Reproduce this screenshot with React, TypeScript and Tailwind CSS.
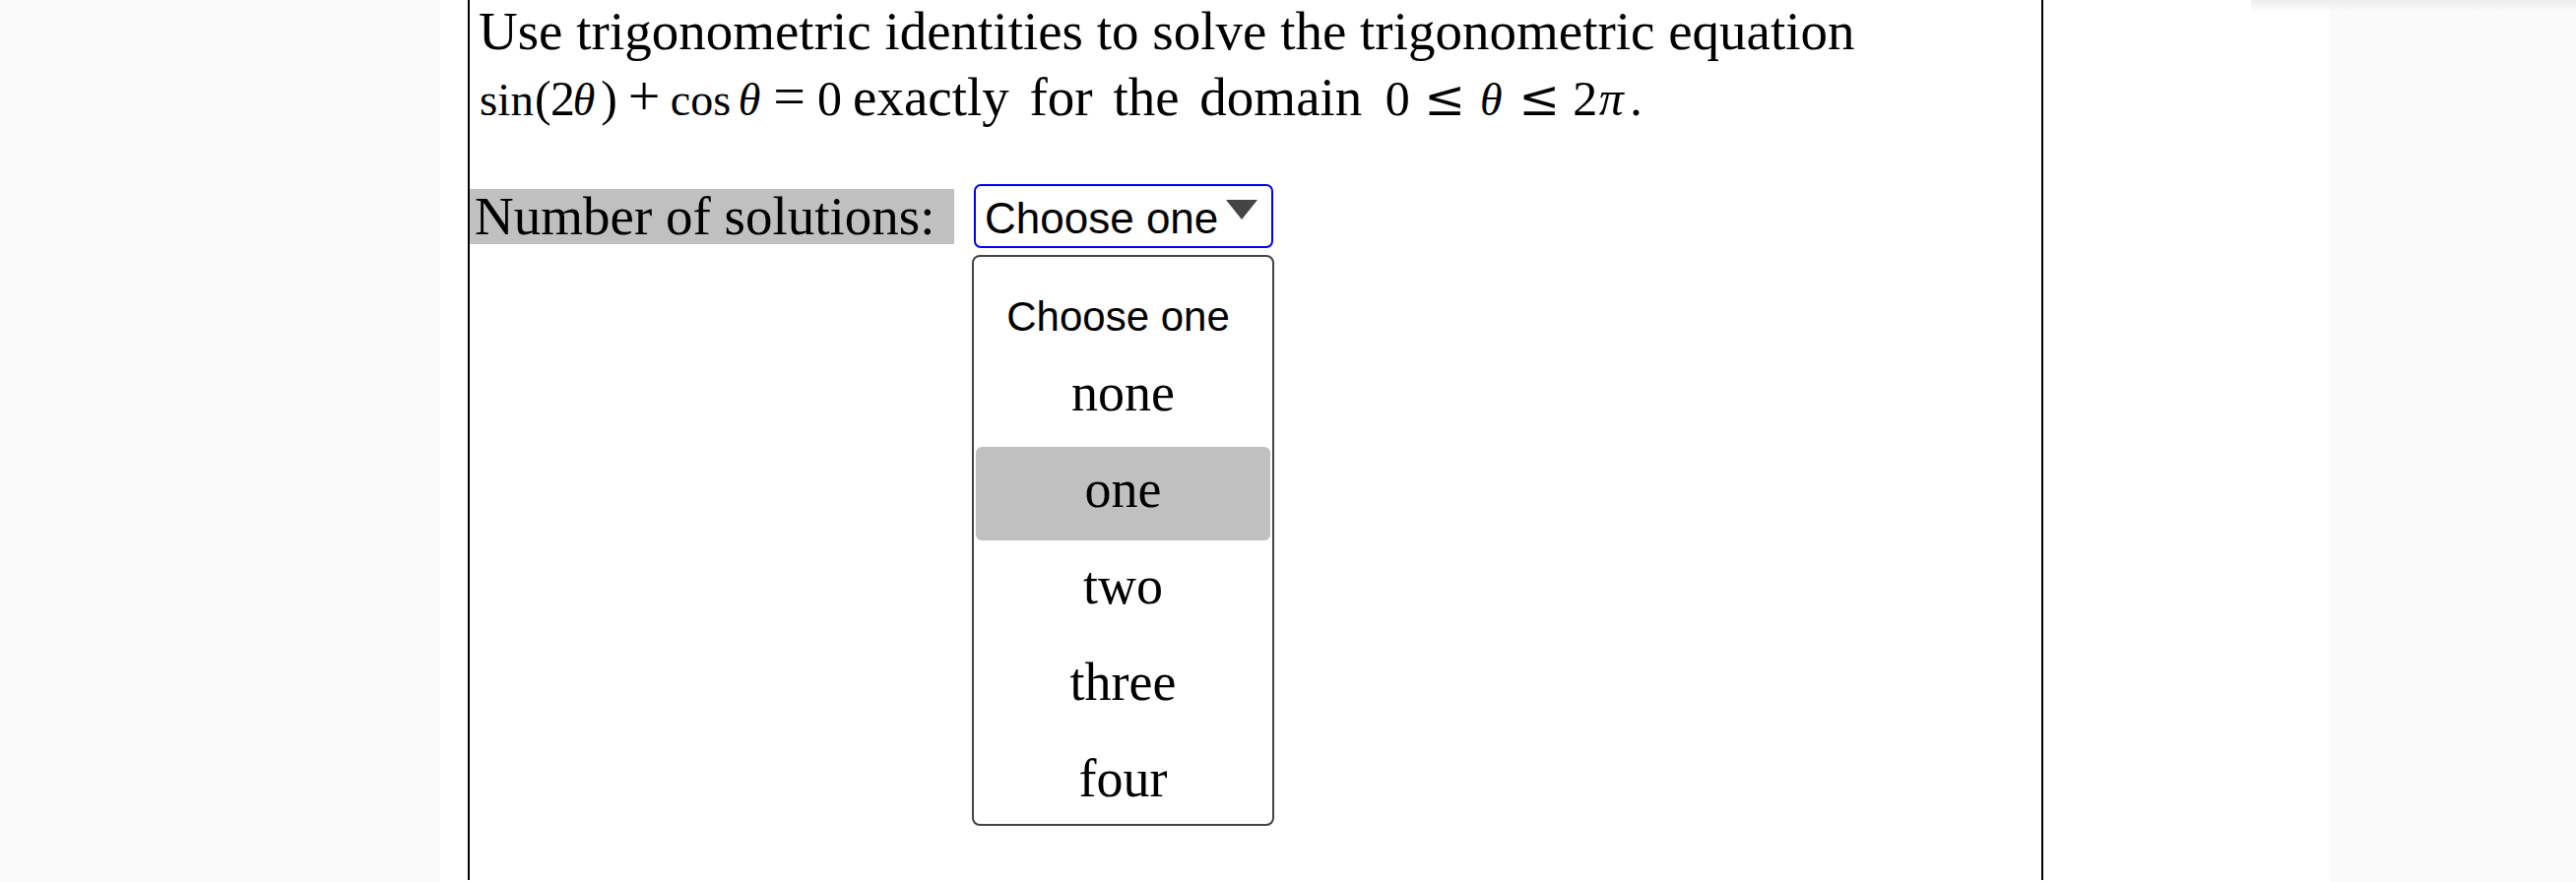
const options = ['none', 'one', 'two', 'three', 'four']

type Glyph = { w: string; t: string; c?: string }

const op = 'text-[58px]'
const rel = "font-['DejaVu_Serif',serif] text-[50px]"
const theta = 'italic text-[46px]'

// math glyph boxes: width + glyph, so the equation keeps its typeset spacing
const lineTwoMath: Glyph[] = [
  { w: 'w-[57px]', t: 'sin', c: 'text-[47px]' },
  { w: 'w-[16px]', t: '(' },
  { w: 'w-[20px]', t: '2' },
  { w: 'w-[28px]', t: 'θ', c: theta },
  { w: 'w-[23px]', t: ')' },
  { w: 'w-[48px]', t: '+', c: op },
  { w: 'w-[67px]', t: 'cos', c: 'text-[46px]' },
  { w: 'w-[32px]', t: 'θ', c: theta },
  { w: 'w-[49px]', t: '=', c: op },
  { w: 'w-[33px]', t: '0' },
]

const domainMath: Glyph[] = [
  { w: 'w-[32px]', t: '0' },
  { w: 'w-[64px]', t: '≤', c: rel },
  { w: 'w-[30px]', t: 'θ', c: theta },
  { w: 'w-[68px]', t: '≤', c: rel },
  { w: 'w-[20px]', t: '2' },
  { w: 'w-[38px]', t: 'π', c: 'italic text-[50px]' },
  { w: 'w-[8px]', t: '.' },
]

function Glyphs({ items }: { items: Glyph[] }) {
  return (
    <>
      {items.map((g, idx) => (
        <span className={`inline-block text-center leading-[50px] ${g.w} ${g.c ?? 'text-[50px]'}`} key={idx}>
          {g.t}
        </span>
      ))}
    </>
  )
}

export default function App() {
  return (
    <div className="relative flex h-[896px] w-full overflow-hidden bg-[#fafafa]">
      <div className="w-[447px] shrink-0" />

      <main className="w-[1919px] shrink-0 bg-white pl-[28px]">
        <div className="h-full w-[1600px] border-x-2 border-black font-['Liberation_Serif',serif] text-[55px] text-black">
          {/* Question */}
          <p className="-mt-[2px] whitespace-nowrap pl-[9px] leading-[67px]">
            Use trigonometric identities to solve the trigonometric equation
            <br />
            <Glyphs items={lineTwoMath} />
            <span className="ml-[7px] [word-spacing:7px]">exactly for the domain</span>
            <span className="inline-block w-[20px]" />
            <Glyphs items={domainMath} />
          </p>

          {/* Answer row */}
          <div className="mt-[55px] flex items-start">
            <div className="mt-[5px] h-[56px] w-[492px] bg-[#c0c0c0] pl-[5px] leading-[56px]">
              Number of solutions:
            </div>

            <div className="relative ml-[20px]">
              <div className="flex h-[65px] w-[304px] items-start rounded-[7px] border-2 border-[#0000f0] bg-white pl-[9px] pt-[11px] font-['Liberation_Sans',Arial,sans-serif] text-[44px] leading-[43px]">
                <span>Choose one</span>
                <svg className="ml-[8px] mt-[3px]" height="20" viewBox="0 0 32 20" width="32">
                  <polygon fill="#444444" points="0,0 32,0 16,20" />
                </svg>
              </div>

              {/* open listbox */}
              <div className="absolute left-[-2px] top-[72px] h-[580px] w-[307px] overflow-hidden rounded-[8px] border-2 border-[#444444] bg-white">
                <div className="h-[95px] pr-[10px] pt-[40px] text-center font-['Liberation_Sans',Arial,sans-serif] text-[42px] leading-[42px]">
                  Choose one
                </div>
                {options.map((opt) => (
                  <div className="h-[98px]" key={opt}>
                    <div
                      className={`mx-[2px] h-[95px] rounded-[6px] pt-[17px] text-center text-[54px] leading-[52px] ${
                        opt === 'one' ? 'bg-[#c0c0c0]' : ''
                      }`}
                    >
                      {opt}
                    </div>
                  </div>
                ))}
              </div>
            </div>
          </div>
        </div>
      </main>

      <div className="flex-1" />

      {/* faint shadow along the top right edge */}
      <div className="pointer-events-none absolute right-0 top-0 h-[12px] w-[330px] bg-linear-to-b from-[#ededed] to-transparent" />
    </div>
  )
}
